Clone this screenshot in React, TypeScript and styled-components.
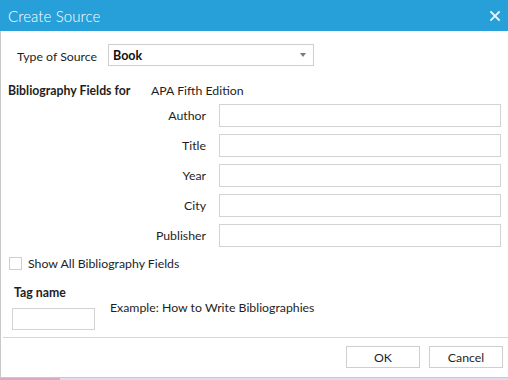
import * as React from "react";
import styled, { createGlobalStyle } from "styled-components";

const Global = createGlobalStyle`
  html, body {
    margin: 0;
    padding: 0;
    background: #ffffff;
  }
  * {
    box-sizing: border-box;
  }
`;

const Dialog = styled.div`
  width: 508px;
  height: 380px;
  display: flex;
  flex-direction: column;
  font-family: "Lato", "Open Sans", sans-serif;
  font-size: 12.3px;
  color: #1e1e1e;
  background: #ffffff;
  overflow: hidden;
`;

const Header = styled.div`
  height: 31px;
  flex: none;
  background: #279fd9;
  display: flex;
  align-items: center;
  justify-content: space-between;
  padding: 0 7px 0 8px;
`;

const Title = styled.div`
  color: #ffffff;
  font-size: 15px;
  font-weight: 300;
  letter-spacing: 0.1px;
`;

const Close = styled.button`
  border: 0;
  background: none;
  padding: 0;
  width: 12px;
  height: 12px;
  display: flex;
  cursor: pointer;
`;

const Body = styled.div`
  flex: 1;
  display: flex;
  flex-direction: column;
  border-left: 1px solid #c9c9c9;
  border-bottom: 1px solid #c9c9c9;
`;

const Content = styled.div`
  flex: 1;
  padding: 13px 0 0 0;
  display: flex;
  flex-direction: column;
`;

const TypeRow = styled.div`
  display: flex;
  align-items: center;
  height: 22px;
`;

const TypeLabel = styled.label`
  width: 107px;
  padding-left: 16px;
  padding-top: 3px;
`;

const Select = styled.div`
  width: 206px;
  height: 22px;
  border: 1px solid #cfcfcf;
  display: flex;
  align-items: center;
  justify-content: space-between;
  padding: 0 7px 0 4px;
  font-weight: 700;
  font-size: 12.5px;
  color: #111;
`;

const Caret = styled.span`
  width: 0;
  height: 0;
  border-left: 3px solid transparent;
  border-right: 3px solid transparent;
  border-top: 4px solid #7a7a7a;
`;

const SectionRow = styled.div`
  display: flex;
  align-items: center;
  height: 16px;
  margin-top: 16px;
  padding-left: 7px;
`;

const SectionLabel = styled.span`
  width: 143px;
  font-weight: 700;
`;

const Fields = styled.div`
  display: grid;
  grid-template-columns: 205px 282px;
  column-gap: 13px;
  row-gap: 7px;
  grid-auto-rows: 23px;
  margin-top: 6px;
`;

const FieldLabel = styled.label`
  justify-self: end;
  align-self: center;
`;

const Input = styled.div<{ $w?: number; $h?: number }>`
  width: ${(p) => p.$w ?? 282}px;
  height: ${(p) => p.$h ?? 23}px;
  border: 1px solid #d3d3d3;
  background: #ffffff;
`;

const TagInput = styled(Input)`
  grid-column: 1;
  grid-row: 2;
  align-self: end;
`;

const CheckRow = styled.div`
  display: flex;
  align-items: center;
  gap: 6px;
  margin-top: 9px;
  padding-left: 8px;
  height: 14px;
`;

const Box = styled.span`
  width: 13px;
  height: 13px;
  border: 1px solid #cfcfcf;
  background: #fff;
`;

const TagArea = styled.div`
  display: grid;
  grid-template-columns: 98px auto;
  grid-template-rows: 16px 29px;
  margin-top: 15px;
  padding-left: 11px;
`;

const TagLabel = styled.span`
  grid-column: 1;
  grid-row: 1;
  font-weight: 700;
  padding-left: 2px;
`;

const Example = styled.span`
  grid-column: 2;
  grid-row: 1 / span 2;
  align-self: center;
`;

const Footer = styled.div`
  height: 40px;
  flex: none;
  border-top: 1px solid #d6d6d6;
  margin-left: 2px;
  display: flex;
  justify-content: flex-end;
  align-items: flex-start;
  gap: 9px;
  padding: 8px 5px 0 0;
`;

const Button = styled.button`
  width: 74px;
  height: 22px;
  border: 1px solid #cfcfcf;
  background: #ffffff;
  font-family: inherit;
  font-size: 12.3px;
  color: #1e1e1e;
  padding: 0;
`;

const Taskbar = styled.div`
  height: 2px;
  flex: none;
  display: flex;
`;

const Strip = styled.div<{ $w?: number; $c: string }>`
  ${(p) => (p.$w ? `width: ${p.$w}px;` : "flex: 1;")}
  background: ${(p) => p.$c};
`;

const fields = ["Author", "Title", "Year", "City", "Publisher"];

export default function App() {
  return (
    <>
      <Global />
      <Dialog>
        <Header>
          <Title>Create Source</Title>
          <Close aria-label="Close">
            <svg width="12" height="12" viewBox="0 0 12 12">
              <path
                d="M2 2 L10 10 M10 2 L2 10"
                stroke="#ffffff"
                strokeWidth="1.8"
                strokeLinecap="square"
                opacity="0.9"
              />
            </svg>
          </Close>
        </Header>
        <Body>
          <Content>
            <TypeRow>
              <TypeLabel>Type of Source</TypeLabel>
              <Select>
                <span>Book</span>
                <Caret />
              </Select>
            </TypeRow>

            <SectionRow>
              <SectionLabel>Bibliography Fields for</SectionLabel>
              <span>APA Fifth Edition</span>
            </SectionRow>

            <Fields>
              {fields.map((f) => (
                <React.Fragment key={f}>
                  <FieldLabel>{f}</FieldLabel>
                  <Input />
                </React.Fragment>
              ))}
            </Fields>

            <CheckRow>
              <Box />
              <span>Show All Bibliography Fields</span>
            </CheckRow>

            <TagArea>
              <TagLabel>Tag name</TagLabel>
              <Example>Example: How to Write Bibliographies</Example>
              <TagInput $w={83} $h={22} />
            </TagArea>
          </Content>
          <Footer>
            <Button>OK</Button>
            <Button>Cancel</Button>
          </Footer>
        </Body>
        <Taskbar>
          <Strip $w={60} $c="#d9a9c6" />
          <Strip $c="#e1dcf0" />
        </Taskbar>
      </Dialog>
    </>
  );
}
